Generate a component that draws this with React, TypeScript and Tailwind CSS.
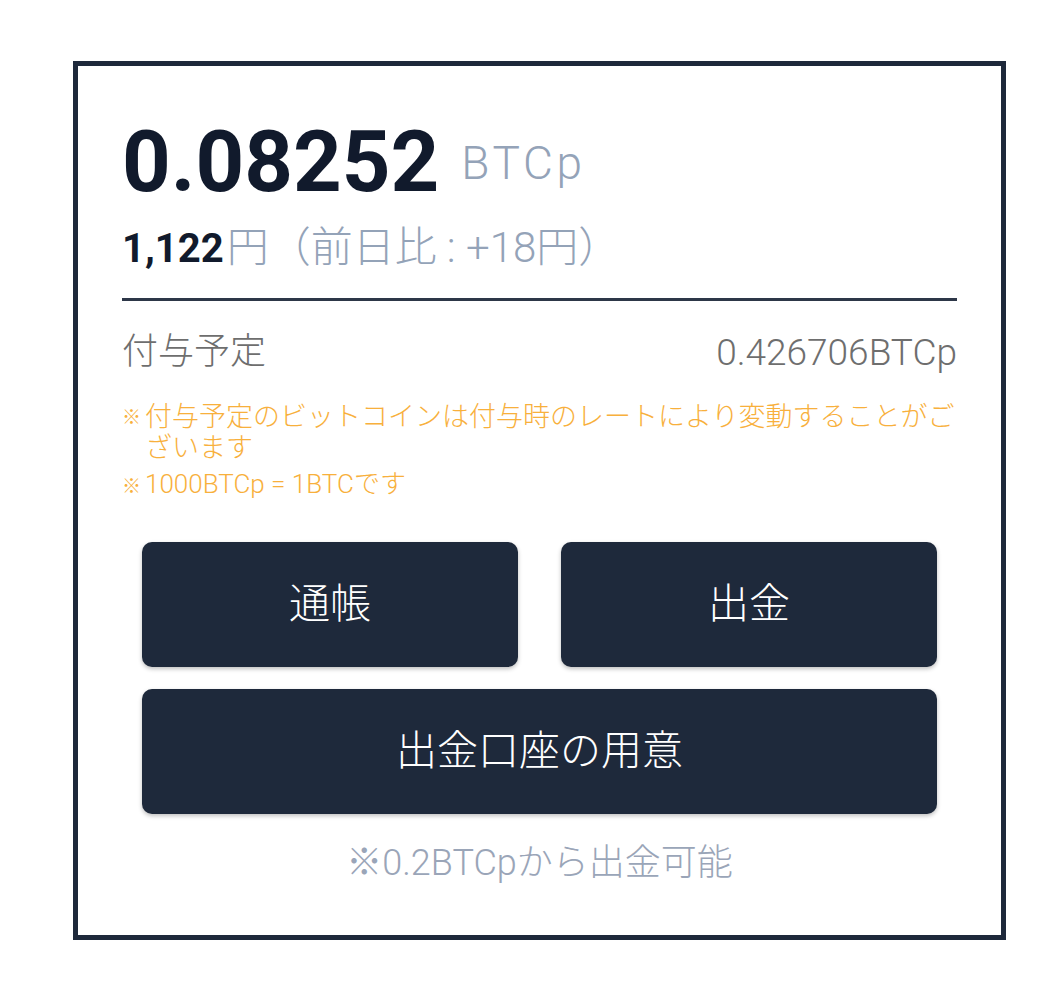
import React from "react";

const FONT = { fontFamily: 'Roboto, "Noto Sans CJK JP", sans-serif' };

export default function App() {
  return (
    <div className="min-h-[988px] bg-white pl-[73px] pt-[61px]" style={FONT}>
      <div className="flex h-[879px] w-[933px] flex-col border-[5px] border-[#1e293b] bg-white px-[44px] pt-[54px]">
        <div className="flex items-center">
          <span className="text-[85px] font-bold leading-none text-[#111a2c]">0.08252</span>
          <span className="ml-[22px] text-[46px] font-light leading-none tracking-[0.08em] text-[#94a3b8]">BTCp</span>
        </div>
        <div className="mt-[22px] flex items-baseline text-[40px] leading-none">
          <span className="font-bold text-[#111a2c]">1,122</span>
          <span className="ml-[3px] text-[42px] font-light text-[#94a3b8]">円（前日比 : +18円）</span>
        </div>
        <div className="mt-[29px] h-[3px] bg-[#2d3748]" />
        <div className="mt-[30px] flex items-center justify-between text-[36px] font-light leading-[43px] text-[#6e6e6e]">
          <span>付与予定</span>
          <span className="text-[37px]">0.426706BTCp</span>
        </div>
        <div className="mt-[28px] font-light text-[#f8b03c]">
          <div className="flex text-[27px] leading-[31px]">
            <span className="w-[23px] shrink-0 text-[19px]">※</span>
            <span className="flex-1">付与予定のビットコインは付与時のレートにより変動することがございます</span>
          </div>
          <div className="mt-[5px] flex items-baseline text-[26px] leading-[30px]">
            <span className="w-[23px] shrink-0 text-[19px]">※</span>
            <span className="flex-1">1000BTCp = 1BTCです</span>
          </div>
        </div>
        <div className="mx-[20px] mt-[40px] flex flex-col gap-[22px]">
          <div className="flex gap-[43px]">
            <button className="flex h-[125px] flex-1 items-center justify-center rounded-[10px] bg-[#1e293b] text-[41px] font-light text-white shadow-[0_2px_4px_rgba(0,0,0,0.25)]">
              通帳
            </button>
            <button className="flex h-[125px] flex-1 items-center justify-center rounded-[10px] bg-[#1e293b] text-[41px] font-light text-white shadow-[0_2px_4px_rgba(0,0,0,0.25)]">
              出金
            </button>
          </div>
          <button className="flex h-[125px] items-center justify-center rounded-[10px] bg-[#1e293b] text-[41px] font-light text-white shadow-[0_2px_4px_rgba(0,0,0,0.25)]">
            出金口座の用意
          </button>
        </div>
        <div className="mt-[28px] text-center text-[36px] font-light leading-[42px] text-[#9aa5b8]">※0.2BTCpから出金可能</div>
      </div>
    </div>
  );
}
